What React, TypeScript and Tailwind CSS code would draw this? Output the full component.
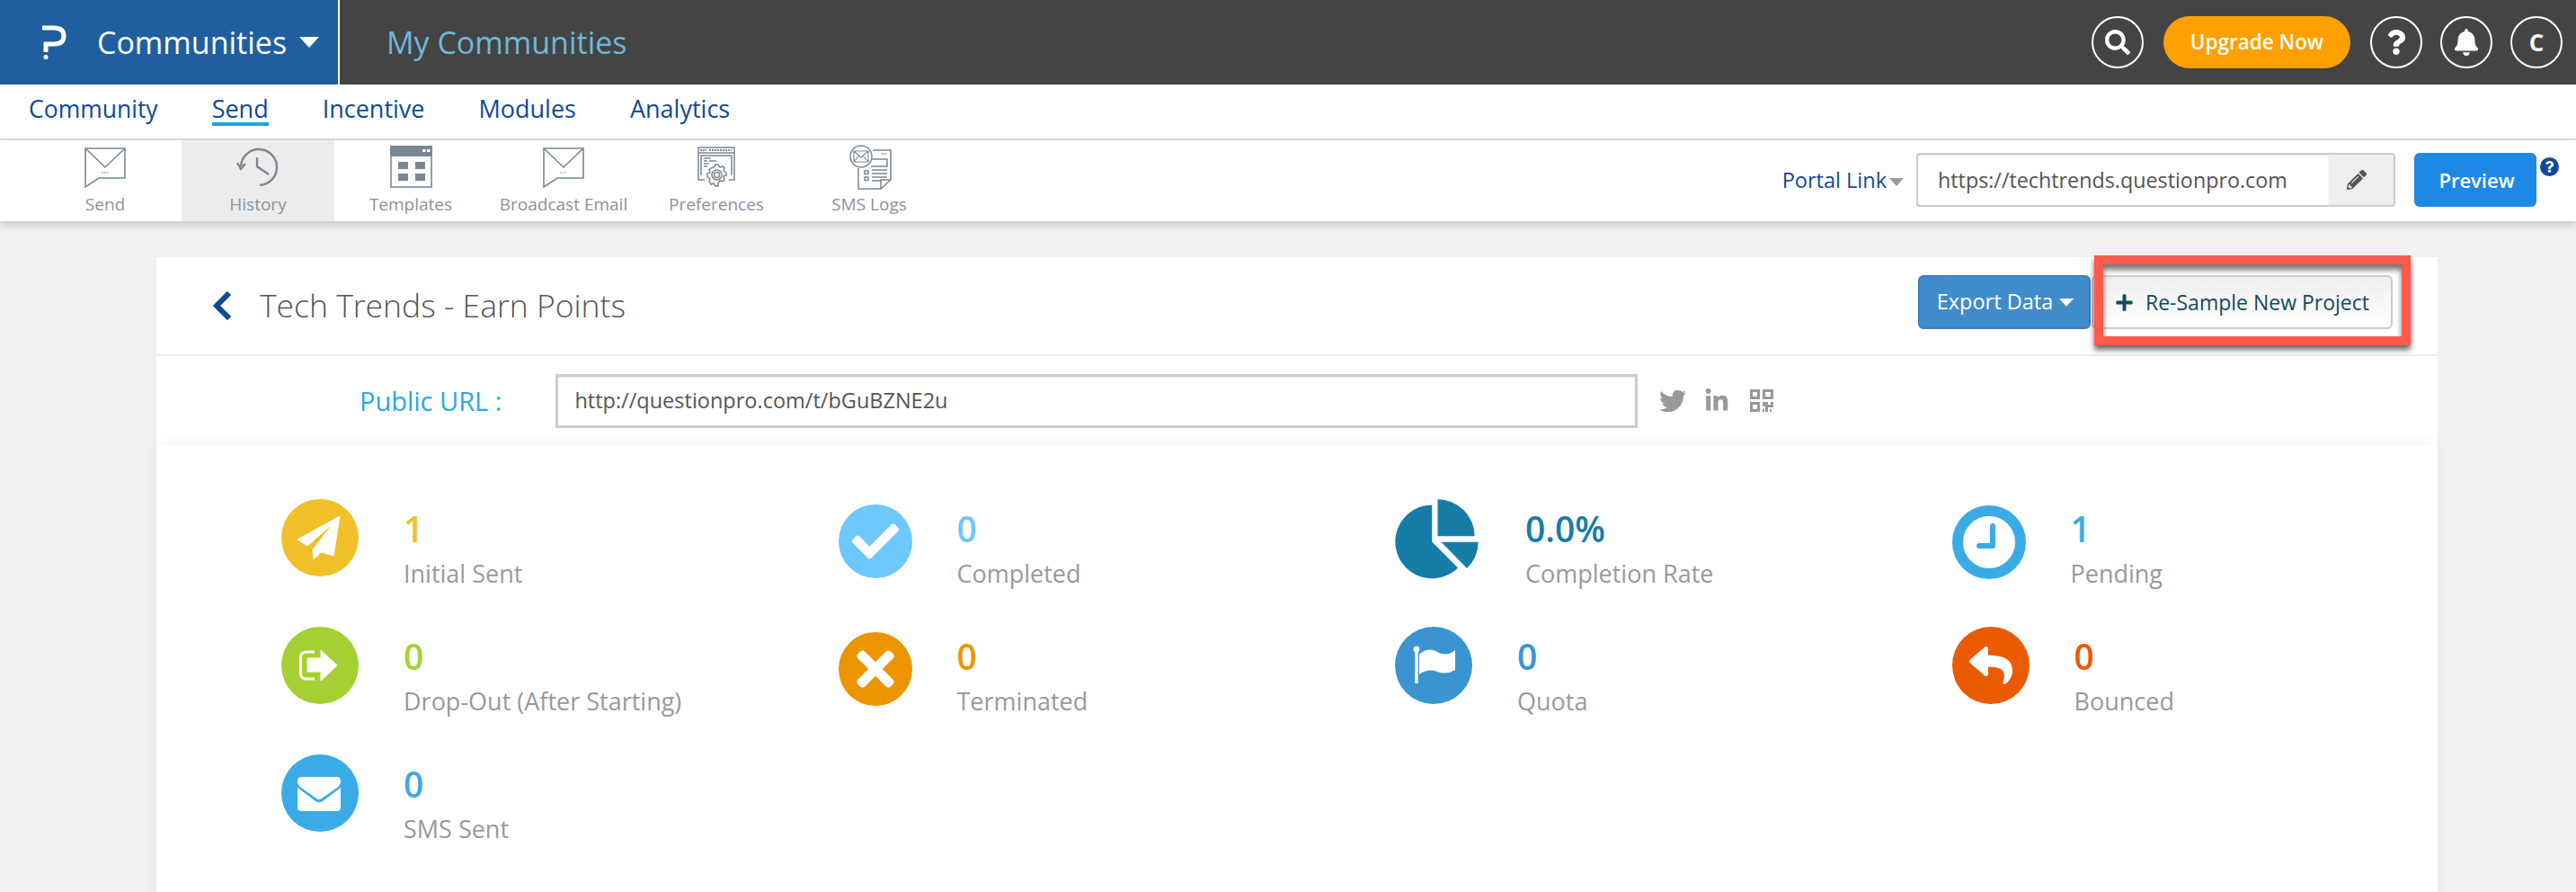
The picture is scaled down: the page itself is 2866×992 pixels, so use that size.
import type { ReactNode } from "react";
import { FaBell, FaCheck, FaLinkedinIn, FaPencilAlt, FaPlus, FaQuestion, FaReply, FaSearch, FaTimes, FaTwitter } from "react-icons/fa";

const iconStroke = "#7b8794";

function MailIcon() {
  return (
    <svg width="46" height="46" viewBox="0 0 46 46" fill="none" stroke={iconStroke} strokeWidth="1.6">
      <path d="M1 2H45V35H16L1 45Z" />
      <path d="M1 2L23 23L45 2" />
      <path d="M19 29H27" strokeDasharray="1.6 1.2" strokeWidth="1.2" />
    </svg>
  );
}

function HistoryIcon() {
  return (
    <svg width="48" height="46" viewBox="0 0 48 46" fill="none" stroke={iconStroke} strokeWidth="2.4">
      <path d="M5 22A20 20 0 1 1 26 43" />
      <path d="M1 18L5 25L10 19" />
      <path d="M23 12V22L36 31" />
    </svg>
  );
}

function TemplatesIcon() {
  return (
    <svg width="47" height="47" viewBox="0 0 47 47" fill="none">
      <rect x="1" y="1" width="45" height="45" stroke={iconStroke} strokeWidth="1.6" />
      <rect x="0" y="0" width="47" height="12" fill={iconStroke} />
      <rect x="36" y="4" width="3.5" height="3" fill="#fff" />
      <rect x="41" y="4" width="3.5" height="3" fill="#fff" />
      <rect x="9" y="18" width="11" height="8" fill={iconStroke} />
      <rect x="28" y="18" width="11" height="8" fill={iconStroke} />
      <rect x="9" y="31" width="11" height="8" fill={iconStroke} />
      <rect x="28" y="31" width="11" height="8" fill={iconStroke} />
    </svg>
  );
}

function PreferencesIcon() {
  return (
    <svg width="42" height="46" viewBox="0 0 42 46" fill="none" stroke={iconStroke} strokeWidth="1.5">
      <path d="M8 37H1V1H41V37H35" />
      <path d="M1 7H41M4 32V10H38V32" />
      <path d="M3 4H10M13 4H38" strokeWidth="2" strokeDasharray="2 1" />
      <path d="M7 13H15M7 16H11M13 16H21M7 19H13M7 22H11" />
      <path d="M18 23L20 20H23L25 23L28 22L30 24L29 27L32 29V32L29 33L30 37L28 39L25 38L23 41V44H20L18 41L15 42L13 39L14 36L11 34V30L14 29L13 26L15 24Z" />
      <circle cx="21.5" cy="31.5" r="5.5" />
      <circle cx="21.5" cy="31.5" r="3" />
    </svg>
  );
}

function SmsIcon() {
  return (
    <svg width="50" height="50" viewBox="0 0 50 50" fill="none" stroke={iconStroke} strokeWidth="1.5">
      <circle cx="16" cy="13" r="12" />
      <path d="M8 7H24V19H8ZM8 7L16 14L24 7M8 19L14 12M24 19L18 12" strokeWidth="1.1" />
      <path d="M29 6H49V39L38 49H13V26" />
      <path d="M38 49V39H49" />
      <path d="M27 16H45V24H27" />
      <path d="M39 10H45" strokeDasharray="1.5 1.2" />
      <rect x="20" y="29" width="4" height="3.5" />
      <rect x="20" y="36" width="4" height="3.5" />
      <path d="M28 28H45M28 32H45M28 36H45M28 40H38" />
    </svg>
  );
}

function PaperPlane() {
  return (
    <svg width="86" height="86" viewBox="0 0 86 86">
      <circle cx="43" cy="43" r="43" fill="#f0c028" />
      <path d="M65 19L18 45L29 52L58 27L35 56L36 67L44 59L58 63Z" fill="#fff" stroke="#fff" strokeLinejoin="round" />
    </svg>
  );
}

function DropOut() {
  return (
    <svg width="86" height="86" viewBox="0 0 86 86">
      <circle cx="43" cy="43" r="43" fill="#a5d033" />
      <path d="M37 28H28Q21.500 28 21.500 34V52Q21.500 58 28 58H37" fill="none" stroke="#fff" strokeWidth="3" />
      <path d="M44 26L62 43L44 60V50H29V35H44Z" fill="#fff" stroke="#fff" strokeLinejoin="round" />
    </svg>
  );
}

function Mail() {
  return (
    <svg width="86" height="86" viewBox="0 0 86 86">
      <circle cx="43" cy="43" r="43" fill="#3aabe6" />
      <path d="M22 25H62Q66 25 66 30Q66 34 62 37L45 49Q42 51 39 49L22 37Q18 34 18 30Q18 25 22 25Z" fill="#fff" />
      <path d="M18 37L38 52Q42 54.500 46 52L66 37V59Q66 63 62 63H22Q18 63 18 59Z" fill="#fff" />
    </svg>
  );
}

function Pie() {
  return (
    <svg className="mr-[2px]" width="93" height="89" viewBox="66 33 280 266" fill="#187ca8">
      <path d="M190 52A123 123 0 1 0 277 262L190 175Z" />
      <path d="M209 33A124 124 0 0 1 333 156H209Z" />
      <path d="M221 176H345A124 124 0 0 1 307 264Z" />
    </svg>
  );
}

function Clock() {
  return (
    <svg width="82" height="82" viewBox="0 0 82 82" fill="none" stroke="#3aabe6">
      <circle cx="41" cy="41" r="35" strokeWidth="12" />
      <path d="M45 23V45H30" strokeWidth="6" strokeLinejoin="round" strokeLinecap="round" />
    </svg>
  );
}

function Flag() {
  return (
    <svg width="86" height="86" viewBox="0 0 86 86">
      <circle cx="43" cy="43" r="43" fill="#3a94d0" />
      <circle cx="24" cy="25" r="3.400" fill="#fff" />
      <rect x="22.300" y="26" width="3.400" height="37" fill="#fff" />
      <path d="M27 31Q37 22 47 28T67 26V48Q57 54 47 50T27 53Z" fill="#fff" />
    </svg>
  );
}

function Round({ color, size, children }: { color: string; size: string; children: ReactNode }) {
  return <div className={`flex items-center justify-center rounded-full text-white ${color} ${size}`}>{children}</div>;
}

function QrIcon() {
  return (
    <svg width="26" height="25" viewBox="0 0 26 25" fill="#999">
      <path d="M0 0H11V11H0ZM3 3V8H8V3Z" fillRule="evenodd" />
      <path d="M14 0H26V11H14ZM17 3V8H23V3Z" fillRule="evenodd" />
      <path d="M0 14H11V25H0ZM3 17V22H8V17Z" fillRule="evenodd" />
      <path d="M14 14H20V17H23V14H26V20H20V25H17V19H14ZM14 22H16V25H14ZM22 22H24V25H22Z" />
    </svg>
  );
}

const tabs = [
  { label: "Send", icon: <MailIcon /> },
  { label: "History", icon: <HistoryIcon />, active: true },
  { label: "Templates", icon: <TemplatesIcon /> },
  { label: "Broadcast Email", icon: <MailIcon /> },
  { label: "Preferences", icon: <PreferencesIcon /> },
  { label: "SMS Logs", icon: <SmsIcon /> },
];

const stats = [
  { value: "1", label: "Initial Sent", color: "text-[#f0c028]", icon: <PaperPlane /> },
  { value: "0", label: "Completed", color: "text-[#6ec8fc]", icon: <Round color="bg-[#6ec8fc]" size="mt-[6px] h-[82px] w-[82px] text-[52px]"><FaCheck /></Round> },
  { value: "0.0%", label: "Completion Rate", color: "text-[#187ca8]", icon: <Pie /> },
  { value: "1", label: "Pending", color: "text-[#3aabe6]", icon: <div className="mt-[7px]"><Clock /></div> },
  { value: "0", label: "Drop-Out (After Starting)", color: "text-[#a5d033]", icon: <DropOut /> },
  { value: "0", label: "Terminated", color: "text-[#eb9500]", icon: <Round color="bg-[#eb9500]" size="mt-[6px] h-[82px] w-[82px] text-[60px]"><FaTimes /></Round> },
  { value: "0", label: "Quota", color: "text-[#3a94d0]", icon: <Flag /> },
  { value: "0", label: "Bounced", color: "text-[#ea5b00]", icon: <Round color="bg-[#ea5b00]" size="h-[86px] w-[86px] text-[48px]"><FaReply /></Round> },
  { value: "0", label: "SMS Sent", color: "text-[#3aabe6]", icon: <Mail /> },
];

export default function App() {
  return (
    <div className="h-[992px] w-[2866px] overflow-hidden bg-[#f1f1f1] font-['Open_Sans',sans-serif]">
      {/* Top bar */}
      <div className="flex h-[94px] items-center bg-[#444444]">
        <div className="flex h-full w-[378px] items-center border-r-2 border-white bg-[#1f5fa0] pl-[46px]">
          <svg width="28" height="40" viewBox="0 0 28 40" fill="none" stroke="#fff" strokeWidth="5">
            <path d="M1 4H14Q25 4 25 13Q25 22 14 22H5V31" />
            <rect x="2.500" y="34" width="5" height="5" rx="2" fill="#fff" stroke="none" />
          </svg>
          <span className="ml-[34px] text-[34px] text-white">Communities</span>
          <span className="ml-[14px] h-0 w-0 border-x-[11px] border-t-[12px] border-x-transparent border-t-white" />
        </div>
        <span className="ml-[52px] text-[34px] text-[#6db8db]">My Communities</span>
        <div className="ml-auto flex items-center pr-[15px] text-white">
          <div className="flex h-[58px] w-[58px] items-center justify-center rounded-full border-2 border-white text-[28px]">
            <FaSearch />
          </div>
          <div className="ml-[22px] flex h-[58px] w-[208px] items-center justify-center rounded-full bg-[#ffa000] text-[22.5px] font-semibold">
            Upgrade Now
          </div>
          <div className="ml-[22px] flex h-[58px] w-[58px] items-center justify-center rounded-full border-2 border-white text-[28px]">
            <FaQuestion />
          </div>
          <div className="ml-[20px] flex h-[58px] w-[58px] items-center justify-center rounded-full border-2 border-white text-[30px]">
            <FaBell />
          </div>
          <div className="ml-[20px] flex h-[58px] w-[58px] items-center justify-center rounded-full border-2 border-white text-[26px] font-bold">
            C
          </div>
        </div>
      </div>

      {/* Main nav */}
      <div className="flex h-[62px] items-start gap-[60px] border-b-2 border-[#dddddd] bg-white pl-[32px] text-[27px] text-[#0f4a96]">
        <span className="h-[46px] pt-[12px] text-[26.5px] leading-[30px]">Community</span>
        <span className="h-[46px] border-b-4 border-[#1fa5de] pt-[12px] leading-[30px]">Send</span>
        <span className="h-[46px] pt-[12px] leading-[30px]">Incentive</span>
        <span className="h-[46px] pt-[12px] leading-[30px]">Modules</span>
        <span className="h-[46px] pt-[12px] leading-[30px]">Analytics</span>
      </div>

      {/* Toolbar */}
      <div className="relative flex h-[90px] bg-white pl-[32px] shadow-[0_4px_10px_rgba(0,0,0,0.18)]">
        {tabs.map((tab) => (
          <div key={tab.label} className={`flex w-[170px] flex-col items-center ${tab.active ? "bg-[#ececec]" : ""}`}>
            <div className="flex h-[59px] items-center justify-center">{tab.icon}</div>
            <span className="whitespace-nowrap text-[19px] leading-[24px] text-[#8a929c]">{tab.label}</span>
          </div>
        ))}
        <div className="ml-auto flex items-start pt-[14px]">
          <span className="mt-[14px] text-[23.5px] leading-[32px] text-[#0f4a96]">Portal Link</span>
          <span className="ml-[3px] mt-[28px] h-0 w-0 border-x-[8px] border-t-[9px] border-x-transparent border-t-[#999999]" />
          <div className="ml-[14px] flex h-[60px] w-[533px] overflow-hidden rounded-[4px] border-2 border-[#cccccc]">
            <div className="flex flex-1 items-center pl-[22px] text-[23.3px] text-[#555555] shadow-[inset_0_2px_2px_rgba(0,0,0,0.08)]">
              https://techtrends.questionpro.com
            </div>
            <div className="flex w-[72px] items-center justify-center bg-[#eeeeee] pr-[10px] text-[22px] text-[#555555]">
              <FaPencilAlt />
            </div>
          </div>
          <div className="ml-[21px] flex h-[60px] w-[136px] items-center justify-center rounded-[6px] bg-[#1e88e5] pl-[3px] text-[22px] font-semibold text-white">
            Preview
          </div>
          <div className="ml-[4px] mr-[19px] mt-[5px] flex h-[21px] w-[21px] items-center justify-center rounded-full bg-[#0f4a96] text-[13px] text-white">
            <FaQuestion />
          </div>
        </div>
      </div>

      {/* Card */}
      <div className="ml-[174px] mt-[40px] w-[2538px]">
        <div className="flex h-[110px] items-center border-b-2 border-[#eeeef2] bg-white pl-[62px] pr-[50px]">
          <svg width="22" height="32" viewBox="0 0 22 32" fill="none" stroke="#0f4a96" strokeWidth="6">
            <path d="M19 2L5 16L19 30" />
          </svg>
          <span className="ml-[31px] text-[35.5px] font-light text-[#555555]">Tech Trends - Earn Points</span>
          <div className="mb-[8px] ml-auto flex items-center">
            <div className="flex h-[60px] w-[192px] items-center justify-center gap-[7px] rounded-[6px] border-2 border-[#3a80c0] bg-[#428bca] pl-[2px] text-[23.5px] text-white">
              Export Data
              <span className="h-0 w-0 border-x-[8px] border-t-[9px] border-x-transparent border-t-white" />
            </div>
            <div className="relative ml-[1px] flex h-[60px] w-[335px] items-center rounded-[6px] border-2 border-[#cccccc] bg-gradient-to-b from-[#eeeeee] to-white pl-[24px] text-[23px] text-[#134a5e]">
              <FaPlus className="mr-[13px] text-[21px]" />
              Re-Sample New Project
              <div className="absolute left-[1px] top-[-24px] h-[100px] w-[352px] border-[10px] border-[#ff5a4d] shadow-[0_5px_6px_rgba(0,0,0,0.6),inset_0_6px_6px_rgba(0,0,0,0.55)]" />
            </div>
          </div>
        </div>

        <div className="flex h-[99px] items-center bg-white pl-[226px]">
          <span className="text-[29px] text-[#29a9e0]">Public URL :</span>
          <div className="ml-[60px] flex h-[60px] w-[1204px] items-center border-[3px] border-[#cccccc] pl-[18px] text-[23.5px] text-[#555555] shadow-[inset_0_2px_2px_rgba(0,0,0,0.06)]">
            http://questionpro.com/t/bGuBZNE2u
          </div>
          <FaTwitter className="ml-[24px] text-[30px] text-[#999999]" />
          <FaLinkedinIn className="ml-[20px] text-[28px] text-[#999999]" />
          <div className="ml-[23px]">
            <QrIcon />
          </div>
        </div>

        <div className="grid h-[520px] grid-cols-[repeat(4,619.5px)] auto-rows-[142px] bg-white pl-[139px] pt-[60px] shadow-[0_0_20px_rgba(0,0,0,0.06)]">
          {stats.map((stat) => (
            <div key={stat.label} className="flex items-start gap-[50px]">
              {stat.icon}
              <div className="pt-[12px]">
                <div className={`text-[39px] font-semibold leading-[42px] ${stat.color}`}>{stat.value}</div>
                <div className="mt-[11px] whitespace-nowrap text-[27px] leading-[36px] text-[#999999]">{stat.label}</div>
              </div>
            </div>
          ))}
        </div>
      </div>
    </div>
  );
}
